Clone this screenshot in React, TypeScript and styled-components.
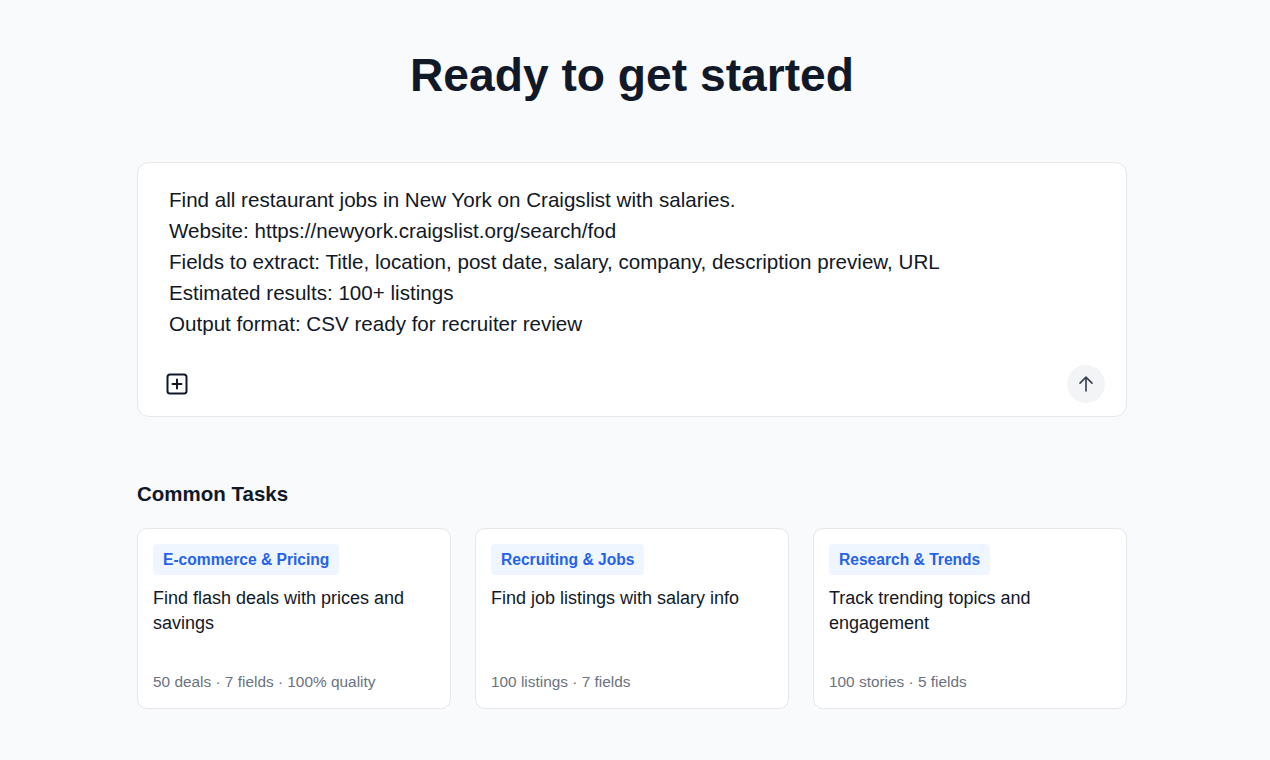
import React from "react";
import styled, { createGlobalStyle } from "styled-components";

const Global = createGlobalStyle`
  html, body { margin: 0; padding: 0; background: #f8fafc; }
  body { font-family: "Liberation Sans", Arial, sans-serif; color: #111827; }
  * { box-sizing: border-box; }
`;

const Page = styled.main`
  width: 990px;
  margin: 0 0 0 137px;
  padding-top: 46px;
  display: flex;
  flex-direction: column;
`;

const Title = styled.h1`
  margin: 0;
  text-align: center;
  font-size: 46.2px;
  line-height: 58px;
  font-weight: 700;
  color: #111827;
`;

const Composer = styled.section`
  margin-top: 58px;
  background: #ffffff;
  border: 1px solid #e5e7eb;
  border-radius: 12px;
  padding: 21px 21px 13px 31px;
  display: flex;
  flex-direction: column;
`;

const Prompt = styled.div`
  font-size: 20.6px;
  line-height: 31px;
  color: #111827;
  white-space: pre-line;
`;

const ComposerBar = styled.div`
  margin-top: 26px;
  display: flex;
  align-items: center;
  justify-content: space-between;
`;

const IconButton = styled.button`
  border: none;
  background: transparent;
  padding: 0;
  margin-left: -4px;
  width: 24px;
  height: 24px;
  display: flex;
  align-items: center;
  justify-content: center;
  color: #111827;
  cursor: pointer;
`;

const SendButton = styled.button`
  border: none;
  padding: 0;
  width: 38px;
  height: 38px;
  border-radius: 50%;
  background: #f3f4f6;
  display: flex;
  align-items: center;
  justify-content: center;
  color: #374151;
  cursor: pointer;
`;

const SectionTitle = styled.h2`
  margin: 64px 0 0 0;
  font-size: 20.5px;
  line-height: 26px;
  font-weight: 700;
  color: #111827;
`;

const Grid = styled.div`
  margin-top: 21px;
  display: grid;
  grid-template-columns: repeat(3, 1fr);
  gap: 24px;
`;

const Card = styled.article`
  background: #ffffff;
  border: 1px solid #e5e7eb;
  border-radius: 10px;
  height: 181px;
  padding: 15px 15px 16px 15px;
  display: flex;
  flex-direction: column;
  align-items: flex-start;
`;

const Tag = styled.span`
  background: #eff6ff;
  color: #2563eb;
  font-weight: 700;
  font-size: 15.6px;
  line-height: 31px;
  padding: 0 10px;
  border-radius: 4px;
`;

const CardText = styled.p`
  margin: 11px 0 0 0;
  font-size: 18px;
  line-height: 25px;
  color: #111827;
`;

const Meta = styled.div`
  margin-top: auto;
  font-size: 15.4px;
  line-height: 20px;
  color: #6b7280;
`;

const tasks = [
  { tag: "E-commerce & Pricing", text: "Find flash deals with prices and savings", meta: "50 deals · 7 fields · 100% quality" },
  { tag: "Recruiting & Jobs", text: "Find job listings with salary info", meta: "100 listings · 7 fields" },
  { tag: "Research & Trends", text: "Track trending topics and engagement", meta: "100 stories · 5 fields" },
];

export default function App() {
  return (
    <>
      <Global />
      <Page>
        <Title>Ready to get started</Title>
        <Composer>
          <Prompt>
            {`Find all restaurant jobs in New York on Craigslist with salaries.
Website: https://newyork.craigslist.org/search/fod
Fields to extract: Title, location, post date, salary, company, description preview, URL
Estimated results: 100+ listings
Output format: CSV ready for recruiter review`}
          </Prompt>
          <ComposerBar>
            <IconButton aria-label="Add">
              <svg width="24" height="24" viewBox="0 0 24 24" fill="none" stroke="currentColor" strokeWidth="2" strokeLinecap="round" strokeLinejoin="round">
                <rect x="2.5" y="2.5" width="19" height="19" rx="2.5" />
                <path d="M12 7.5v9M7.5 12h9" />
              </svg>
            </IconButton>
            <SendButton aria-label="Send">
              <svg width="22" height="22" viewBox="0 0 24 24" fill="none" stroke="currentColor" strokeWidth="1.8" strokeLinecap="round" strokeLinejoin="round">
                <path d="M12 19.5V4.5M5.5 11l6.5-6.5 6.5 6.5" />
              </svg>
            </SendButton>
          </ComposerBar>
        </Composer>
        <SectionTitle>Common Tasks</SectionTitle>
        <Grid>
          {tasks.map((t) => (
            <Card key={t.tag}>
              <Tag>{t.tag}</Tag>
              <CardText>{t.text}</CardText>
              <Meta>{t.meta}</Meta>
            </Card>
          ))}
        </Grid>
      </Page>
    </>
  );
}
